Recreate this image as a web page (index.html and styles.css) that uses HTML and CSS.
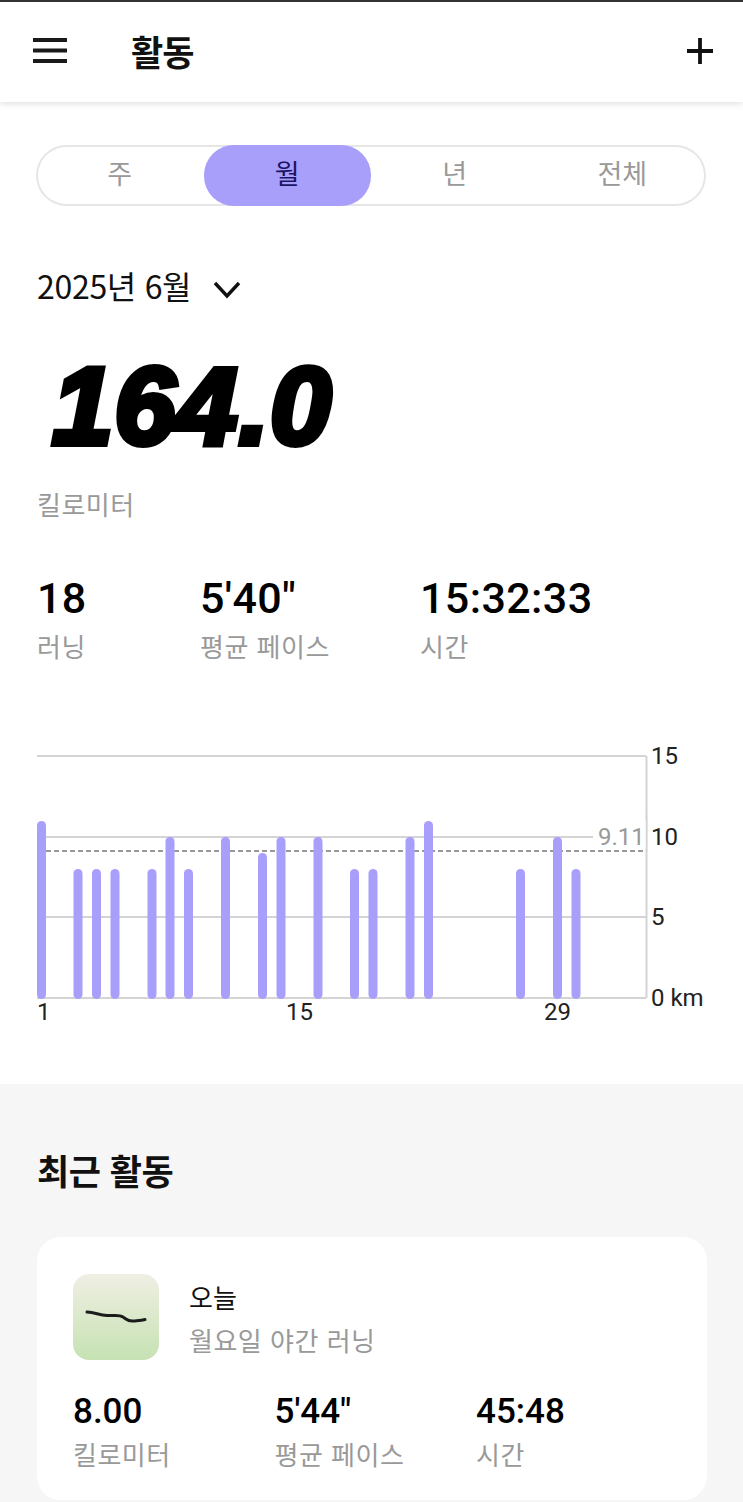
FILE: index.html
```html
<!DOCTYPE html>
<html lang="ko">
  <head>
    <meta charset="UTF-8" />
    <meta name="viewport" content="width=device-width, initial-scale=1.0" />
    <title>활동</title>
    <link rel="stylesheet" href="styles.css">
  </head>

  <body>
    <header class="topbar">
      <svg class="menu-icon" width="36" height="26" viewBox="0 0 36 26">
        <path d="M1 2H35M1 12.500H35M1 23H35" stroke="#1a1a1a" stroke-width="3.800" fill="none" />
      </svg>
      <h1 class="topbar-title">활동</h1>
      <svg class="plus-icon" width="26" height="26" viewBox="0 0 26 26">
        <path d="M13 0V26M0 13H26" stroke="#111" stroke-width="3.800" fill="none" />
      </svg>
    </header>

    <main class="summary">
      <nav class="tabs">
        <button class="tab">주</button>
        <button class="tab tab-active">월</button>
        <button class="tab">년</button>
        <button class="tab">전체</button>
      </nav>

      <div class="month">
        <span>2025년 6월</span>
        <svg width="28" height="18" viewBox="0 0 28 18">
          <path d="M2 2L14 15L26 2" stroke="#111" stroke-width="3.400" fill="none" />
        </svg>
      </div>

      <p class="total">164.0</p>
      <p class="label total-label">킬로미터</p>

      <div class="stats">
        <div class="stat stat-runs">
          <p class="stat-value">18</p>
          <p class="label">러닝</p>
        </div>
        <div class="stat stat-pace">
          <p class="stat-value">5'40"</p>
          <p class="label">평균 페이스</p>
        </div>
        <div class="stat">
          <p class="stat-value">15:32:33</p>
          <p class="label">시간</p>
        </div>
      </div>

      <svg class="chart" width="743" height="290" viewBox="0 0 743 290">
        <g class="grid">
          <path d="M37 11H646M37 92H646M37 172H646M37 253H646M646.500 11V253" />
        </g>
        <rect x="593" y="76" width="53" height="28" fill="#fff" />
        <path class="grid" d="M646.500 70V106" opacity="0.5" />
        <path class="avg-line" d="M46 106H646" />
        <g class="bars">
          <rect x="37" y="76" width="9" height="178" rx="4.500" />
          <rect x="73.500" y="124" width="9" height="130" rx="4.500" />
          <rect x="92" y="124" width="9" height="130" rx="4.500" />
          <rect x="110.500" y="124" width="9" height="130" rx="4.500" />
          <rect x="147.500" y="124" width="9" height="130" rx="4.500" />
          <rect x="165.500" y="92" width="9" height="162" rx="4.500" />
          <rect x="184" y="124" width="9" height="130" rx="4.500" />
          <rect x="221" y="92" width="9" height="162" rx="4.500" />
          <rect x="258" y="108" width="9" height="146" rx="4.500" />
          <rect x="276.500" y="92" width="9" height="162" rx="4.500" />
          <rect x="313.500" y="92" width="9" height="162" rx="4.500" />
          <rect x="350" y="124" width="9" height="130" rx="4.500" />
          <rect x="368.500" y="124" width="9" height="130" rx="4.500" />
          <rect x="405.500" y="92" width="9" height="162" rx="4.500" />
          <rect x="424" y="76" width="9" height="178" rx="4.500" />
          <rect x="516" y="124" width="9" height="130" rx="4.500" />
          <rect x="553" y="92" width="9" height="162" rx="4.500" />
          <rect x="571.500" y="124" width="9" height="130" rx="4.500" />
        </g>
        <text class="avg-text" x="598" y="100">9.11</text>
        <text x="651" y="19">15</text>
        <text x="651" y="100">10</text>
        <text x="651" y="180">5</text>
        <text x="651" y="261">0 km</text>
        <text x="37" y="275">1</text>
        <text x="286" y="275">15</text>
        <text x="544" y="275">29</text>
      </svg>
    </main>

    <section class="recent">
      <h2 class="recent-title">최근 활동</h2>
      <article class="card">
        <div class="card-top">
          <div class="thumb">
            <svg width="86" height="86" viewBox="0 0 86 86">
              <path d="M14 38C22 38.500 26 41 34 41.500C42 42 46 40.500 50 43C54 45.500 55 47.500 60 47C65 46.500 68 46.500 72 45.500" stroke="#1c1c1c" stroke-width="3" stroke-linecap="round" fill="none" />
            </svg>
          </div>
          <div class="card-info">
            <p class="card-when">오늘</p>
            <p class="label">월요일 야간 러닝</p>
          </div>
        </div>
        <div class="card-stats">
          <div class="card-stat">
            <p class="card-value">8.00</p>
            <p class="label">킬로미터</p>
          </div>
          <div class="card-stat">
            <p class="card-value">5'44"</p>
            <p class="label">평균 페이스</p>
          </div>
          <div class="card-stat">
            <p class="card-value">45:48</p>
            <p class="label">시간</p>
          </div>
        </div>
      </article>
    </section>
  </body>
</html>
```

FILE: styles.css
```css
* {
  box-sizing: border-box;
}
html,
body {
  margin: 0;
  background-color: #fff;
}
body {
  width: 743px;
  height: 1502px;
  overflow: hidden;
  font-family: "Noto Sans CJK KR", Inter, sans-serif;
  color: #111;
}
p,
h1,
h2 {
  margin: 0;
}
.topbar {
  display: flex;
  align-items: center;
  height: 102px;
  padding: 0 30px 0 32px;
  border-top: 2px solid #333;
  box-shadow: 0 2px 6px rgba(0, 0, 0, 0.12);
  position: relative;
}
.menu-icon {
  margin-top: -2px;
}
.topbar-title {
  margin-left: 63px;
  padding-bottom: 3px;
  font-size: 35px;
  line-height: 46px;
  font-weight: 700;
  letter-spacing: -1px;
  color: #111;
}
.plus-icon {
  margin-left: auto;
  margin-top: -2px;
}
.summary {
  height: 982px;
  padding: 43px 37px 0;
}
.tabs {
  display: grid;
  grid-template-columns: repeat(4, 1fr);
  width: 670px;
  height: 61px;
  margin-left: -1px;
  border-radius: 31px;
  box-shadow: inset 0 0 0 2px #e6e6e6;
}
.tab {
  height: 61px;
  padding: 0 0 6px;
  border: 0;
  border-radius: 30px;
  background: none;
  font-family: inherit;
  font-size: 27px;
  color: #999;
}
.tab-active {
  background-color: #a89ffb;
  color: #1b1464;
}
.month {
  display: flex;
  align-items: center;
  gap: 22px;
  margin-top: 54px;
  height: 50px;
  font-size: 32px;
  letter-spacing: -0.3px;
  color: #111;
}
.month svg {
  margin-top: 10px;
}
.total {
  margin-top: 35px;
  margin-left: 15px;
  height: 122px;
  font-family: "Liberation Sans", sans-serif;
  font-size: 110px;
  line-height: 122px;
  font-weight: 700;
  font-style: italic;
  letter-spacing: 1px;
  color: #000;
  -webkit-text-stroke: 6px #000;
}
.label {
  font-size: 26px;
  line-height: 36px;
  letter-spacing: 0.5px;
  color: #999;
}
.total-label {
  margin-top: 19px;
}
.stats {
  display: flex;
  margin-top: 51px;
}
.stat-runs {
  width: 163px;
}
.stat-pace {
  width: 220px;
}
.stat-value {
  font-family: Roboto, sans-serif;
  font-size: 43px;
  line-height: 50px;
  font-weight: 500;
  letter-spacing: 0.4px;
  color: #000;
}
.stat .label {
  margin-top: 5px;
}
.chart {
  display: block;
  margin: 81px 0 0 -37px;
  overflow: visible;
}
.chart text {
  font-family: Roboto, sans-serif;
  font-size: 24px;
  fill: #222;
}
.chart .avg-text {
  fill: #999;
}
.grid {
  stroke: #d4d4d4;
  stroke-width: 2;
  fill: none;
}
.avg-line {
  stroke: #777;
  stroke-width: 1.500;
  stroke-dasharray: 5 3;
  fill: none;
}
.bars rect {
  fill: #a89ffb;
}
.recent {
  height: 418px;
  padding: 63px 36px 0 37px;
  background-color: #f6f6f6;
}
.recent-title {
  font-size: 35px;
  line-height: 46px;
  font-weight: 700;
  letter-spacing: -0.5px;
  color: #111;
}
.card {
  margin-top: 44px;
  height: 263px;
  padding: 37px 36px 0;
  border-radius: 24px;
  background-color: #fff;
}
.card-top {
  display: flex;
  gap: 30px;
}
.thumb {
  width: 86px;
  height: 86px;
  border-radius: 16px;
  background: linear-gradient(#f0efe4, #c6e2b2);
}
.thumb svg {
  display: block;
}
.card-when {
  margin-top: 5px;
  font-size: 26px;
  line-height: 36px;
}
.card-info .label {
  margin-top: 7px;
}
.card-stats {
  display: flex;
  margin-top: 29px;
}
.card-stat {
  flex: 0 0 auto;
  width: 201.500px;
}
.card-value {
  font-family: Roboto, sans-serif;
  font-size: 35px;
  line-height: 46px;
  font-weight: 500;
  color: #000;
}
.card-stat .label {
  margin-top: 1px;
}
```
